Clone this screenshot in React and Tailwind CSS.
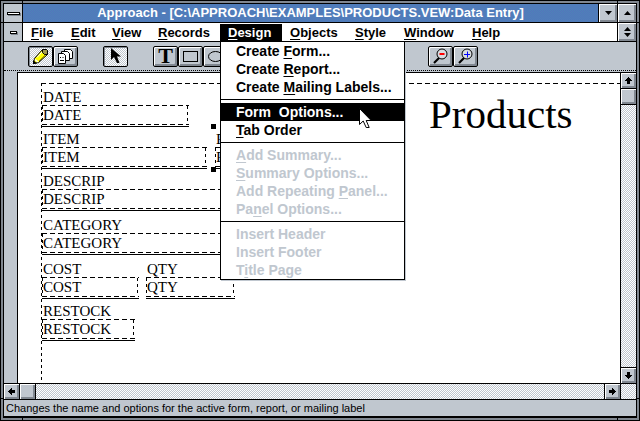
import clsx from 'clsx';

const hatch = 'bg-[conic-gradient(#c0c7cf_25%,#fff_0_50%,#c0c7cf_0_75%,#fff_0)] bg-[length:2px_2px]';
const titleDither = 'bg-[conic-gradient(#4c84b8_25%,#5474bc_0_50%,#4c84b8_0_75%,#5474bc_0)] bg-[length:2px_2px]';
const bevel = 'bg-[#c0c7cf] shadow-[inset_1px_1px_0_#fff,inset_-2px_-2px_0_#808790]';
const dashX = 'bg-[repeating-linear-gradient(90deg,#000_0_5px,transparent_5px_8px)]';
const dashY = 'bg-[repeating-linear-gradient(180deg,#000_0_3px,transparent_3px_6px)]';

// "&" marks the accelerator letter, like in a Windows resource file
function Accel({ text }) {
  const i = text.indexOf('&');
  if (i < 0) return text;
  return (
    <>
      {text.slice(0, i)}
      <span className="underline underline-offset-2">{text[i + 1]}</span>
      {text.slice(i + 2)}
    </>
  );
}

const menus = [
  { text: '&File', width: 'w-[40px]' },
  { text: '&Edit', width: 'w-[41px]' },
  { text: '&View', width: 'w-[46px]' },
  { text: '&Records', width: 'w-[70px]' },
  { text: '&Design', width: 'w-[62px]', open: true },
  { text: '&Objects', width: 'w-[65px]' },
  { text: '&Style', width: 'w-[49px]' },
  { text: '&Window', width: 'w-[68px]' },
  { text: '&Help', width: 'w-[48px]' },
];

const designMenu = [
  [{ text: 'Create &Form...' }, { text: 'Create &Report...' }, { text: 'Create &Mailing Labels...' }],
  [{ text: 'Form  Options...', active: true }, { text: '&Tab Order' }],
  [
    { text: '&Add Summary...', disabled: true },
    { text: '&Summary Options...', disabled: true },
    { text: 'Add Repeating &Panel...', disabled: true },
    { text: 'Pa&nel Options...', disabled: true },
  ],
  [
    { text: 'Insert Header', disabled: true },
    { text: 'Insert Footer', disabled: true },
    { text: 'T&itle Page', disabled: true },
  ],
];

// Where the user dropped each field on the form
const fields = [
  { name: 'DATE', place: 'left-[24px] top-[15px] w-[147px]' },
  { name: 'ITEM', place: 'left-[24px] top-[57px] w-[165px]' },
  { name: 'P', place: 'left-[197px] top-[57px] w-[120px]' },
  { name: 'DESCRIP', place: 'left-[24px] top-[99px] w-[330px]' },
  { name: 'CATEGORY', place: 'left-[24px] top-[143px] w-[330px]' },
  { name: 'COST', place: 'left-[24px] top-[187px] w-[97px]' },
  { name: 'QTY', place: 'left-[128px] top-[187px] w-[89px]' },
  { name: 'RESTOCK', place: 'left-[24px] top-[229px] w-[93px]' },
];

function DesignMenu() {
  return (
    <div role="menu" className="absolute left-0 top-full z-10 w-[185px] border border-black bg-white text-[14px] shadow-[1px_1px_0_#c0c7cf]">
      {designMenu.map((group, g) => (
        <div key={g}>
          {g > 0 && (
            <div className="py-[3px]">
              <div className="h-px bg-black" />
            </div>
          )}
          {group.map((item) => (
            <button
              key={item.text}
              role="menuitem"
              disabled={item.disabled}
              className={clsx(
                'block h-[18px] w-full whitespace-pre pl-[15px] text-left leading-[18px]',
                item.active && 'bg-black text-white',
                item.disabled && 'text-[#c0c7cf]'
              )}
            >
              <Accel text={item.text} />
            </button>
          ))}
        </div>
      ))}
      <svg className="absolute left-[138px] top-[66px]" width="13" height="21" viewBox="0 0 13 21">
        <path d="M.5 .5v16l3.700-3.500 3 6.500h3l-3-7h5z" fill="#fff" stroke="#000" />
      </svg>
    </div>
  );
}

function Field({ name, place }) {
  return (
    <div className={clsx('absolute border-b border-black pb-px text-[15px] leading-[18px]', place)}>
      <label htmlFor={name} className="block h-[17px] pl-px">
        {name}
      </label>
      <div className="flex h-5 flex-col">
        <div className={clsx('h-px', dashX)} />
        <div className="flex min-h-0 flex-1">
          <div className={clsx('w-px', dashY)} />
          <input id={name} readOnly value={name} className="h-[18px] min-w-0 flex-1 outline-none" />
          <div className={clsx('mr-px w-px', dashY)} />
        </div>
        <div className={clsx('h-px', dashX)} />
      </div>
    </div>
  );
}

function ToolButton({ label, pressed, children }) {
  return (
    <button
      aria-label={label}
      className={clsx(
        'flex h-[21px] w-[25px] items-center justify-center rounded-[2px] border border-black',
        pressed ? clsx(hatch, 'shadow-[inset_1px_1px_0_#808790]') : bevel
      )}
    >
      {children}
    </button>
  );
}

function Zoom({ color, plus }) {
  return (
    <svg width="17" height="17" viewBox="0 0 17 17" fill="none">
      <circle cx="10" cy="6" r="5" fill="#d8dce0" stroke="#000" />
      <path d="M7 10l-5 5" stroke="#000" strokeWidth="2.200" />
      <path d={plus ? 'M7 6.500h6M10.500 3.500v6' : 'M7.500 6h5'} stroke={color} strokeWidth={plus ? 1 : 2} />
    </svg>
  );
}

function ArrowButton({ label, turn, className }) {
  return (
    <button aria-label={label} className={clsx('flex shrink-0 items-center justify-center', bevel, className)}>
      <svg width="9" height="9" viewBox="0 0 9 9" className={turn}>
        <path d="M4 1h1v1h1v1h1v1h1v1H6v3H3V5H1V4h1V3h1V2h1z" fill="#000" />
      </svg>
    </button>
  );
}

export default function App() {
  return (
    <div className="relative flex min-h-screen flex-col border border-black bg-[#808790] p-[2px] font-['Liberation_Sans',Arial,sans-serif] text-[13px] font-bold text-black">
      {/* resize notches in the window frame */}
      <span className="absolute left-[21px] top-0 h-[2px] w-px bg-black" />
      <span className="absolute right-[21px] top-0 h-[2px] w-px bg-black" />
      <span className="absolute bottom-0 left-[21px] h-[2px] w-px bg-black" />
      <span className="absolute bottom-0 right-[21px] h-[2px] w-px bg-black" />
      <span className="absolute left-0 top-[21px] h-px w-[2px] bg-black" />
      <span className="absolute right-0 top-[21px] h-px w-[2px] bg-black" />
      <span className="absolute bottom-[21px] left-0 h-px w-[2px] bg-black" />
      <span className="absolute bottom-[21px] right-0 h-px w-[2px] bg-black" />

      <div className="flex flex-1 flex-col border border-b-2 border-black bg-[#c0c7cf]">
        <header className="flex h-[19px] border-b border-black">
          <button aria-label="Control menu" className="flex w-[19px] items-center justify-center border-r border-black">
            <span className="h-[3px] w-[13px] border border-black bg-white shadow-[1px_1px_0_#808790]" />
          </button>
          <h1 className={clsx('flex-1 text-center leading-[18px] text-white', titleDither)}>
            Approach - [C:\APPROACH\EXAMPLES\PRODUCTS.VEW:Data Entry]
          </h1>
          <button aria-label="Minimize" className={clsx('flex w-[19px] items-center justify-center border-l border-black', bevel)}>
            <svg width="7" height="4" viewBox="0 0 7 4">
              <path d="M0 0h7L3.500 4z" />
            </svg>
          </button>
          <button aria-label="Maximize" className={clsx('flex w-[19px] items-center justify-center border-l border-black', bevel)}>
            <svg width="7" height="4" viewBox="0 0 7 4">
              <path d="M0 4h7L3.500 0z" />
            </svg>
          </button>
        </header>

        <nav className="flex h-[19px] border-b border-black bg-white">
          <button aria-label="Document menu" className="flex w-[19px] items-center justify-center border-r border-black bg-[#c0c7cf]">
            <span className="h-[3px] w-[7px] border border-black bg-white shadow-[1px_1px_0_#808790]" />
          </button>
          {menus.map((menu) => (
            <div key={menu.text} className={clsx('relative', menu.width)}>
              <button className={clsx('h-[18px] w-full px-2 text-left leading-[18px]', menu.open && 'bg-black text-white')}>
                <Accel text={menu.text} />
              </button>
              {menu.open && <DesignMenu />}
            </div>
          ))}
          <button aria-label="Restore" className={clsx('ml-auto flex w-[19px] items-center justify-center border-l border-black', bevel)}>
            <svg width="7" height="10" viewBox="0 0 7 10">
              <path d="M0 4h7L3.500 0zM0 6h7L3.500 10z" />
            </svg>
          </button>
        </nav>

        <div className="flex h-[29px] items-center border-b border-dotted border-black pl-6">
          <ToolButton label="Edit" pressed>
            <svg width="17" height="17" viewBox="0 0 17 17">
              <path d="M1.500 15.500l1-5 8-9h4l1 1v4l-9 8z" fill="#ff0" stroke="#000" />
              <path d="M5 9.500l5-5.500" stroke="#fff" />
              <path d="M7 13l6-6" stroke="#a09000" />
              <path d="M10.500 1.500h4l1 1v4h-3l-2-2z" fill="#a09850" stroke="#000" />
              <path d="M1 16v-4l4 3.500z" fill="#000" />
              <path d="M3 11.500l3 2.500" stroke="#fff" strokeWidth="1.500" />
            </svg>
          </ToolButton>
          <ToolButton label="Copies">
            <svg width="17" height="15" viewBox="0 0 17 15" fill="#fff" stroke="#000">
              <path d="M7.500 .5h6l2 2v7h-8z" />
              <path d="M4.500 2.500h6l2 2v7h-8z" />
              <path d="M1.500 4.500h5l2 2v8h-7z" />
              <path d="M3 8.500h1M5.500 8.500h1M3 11.500h4" />
            </svg>
          </ToolButton>
          <div className="w-[25px]" />
          <ToolButton label="Pointer" pressed>
            <svg width="11" height="16" viewBox="0 0 11 16">
              <path d="M1 0v12l3-3 3 6h2.500L7 8.500h4z" />
            </svg>
          </ToolButton>
          <div className="w-[25px]" />
          <ToolButton label="Text">
            <span className="font-['Liberation_Serif',serif] text-[22px] leading-[18px]">T</span>
          </ToolButton>
          <ToolButton label="Rectangle">
            <svg width="15" height="11" viewBox="0 0 15 11" fill="none" stroke="#000">
              <rect x=".5" y=".5" width="14" height="10" />
            </svg>
          </ToolButton>
          <ToolButton label="Ellipse">
            <svg width="15" height="11" viewBox="0 0 15 11" fill="none" stroke="#000">
              <ellipse cx="7.500" cy="5.500" rx="7" ry="5" />
            </svg>
          </ToolButton>
          <div className="w-[200px]" />
          <ToolButton label="Zoom out">
            <Zoom color="#f00" />
          </ToolButton>
          <ToolButton label="Zoom in">
            <Zoom color="#00f" plus />
          </ToolButton>
        </div>

        <div className="flex flex-1 pt-px">
          <div className="w-[13px]" />
          <main className="relative flex-1 overflow-hidden border-l border-t border-black bg-white font-['Liberation_Serif',serif] font-normal">
            <div className={clsx('absolute left-[23px] right-0 top-[10px] h-px', dashX)} />
            <div className={clsx('absolute bottom-0 left-[23px] top-[10px] w-px', dashY)} />
            {fields.map((field) => (
              <Field key={field.name} {...field} />
            ))}
            <span className="absolute left-[193px] top-[51px] size-[5px] bg-black" />
            <span className="absolute left-[193px] top-[94px] size-[5px] bg-black" />
            <h2 className="absolute left-[411px] top-[18px] text-[41px] leading-[46px]">Products</h2>
          </main>
          <div className={clsx('flex w-[16px] flex-col border-l border-t border-black', hatch)}>
            <ArrowButton label="Scroll up" className="h-[15px]" />
            <div className={clsx('h-[17px] border-y border-black', bevel)} />
            <ArrowButton label="Scroll down" turn="rotate-180" className="mt-auto h-[16px] border-t border-black" />
          </div>
        </div>

        <div className={clsx('flex h-[17px] border-y border-black', hatch)}>
          <ArrowButton label="Scroll left" turn="-rotate-90" className="w-[15px]" />
          <div className={clsx('w-[17px] border-x border-black', bevel)} />
          <ArrowButton label="Scroll right" turn="rotate-90" className="ml-auto mr-[15px] w-[17px] border-x border-black" />
        </div>

        <footer className="h-[16px] px-[2px] text-[11px] font-normal leading-[16px]">
          Changes the name and options for the active form, report, or mailing label
        </footer>
      </div>
    </div>
  );
}
